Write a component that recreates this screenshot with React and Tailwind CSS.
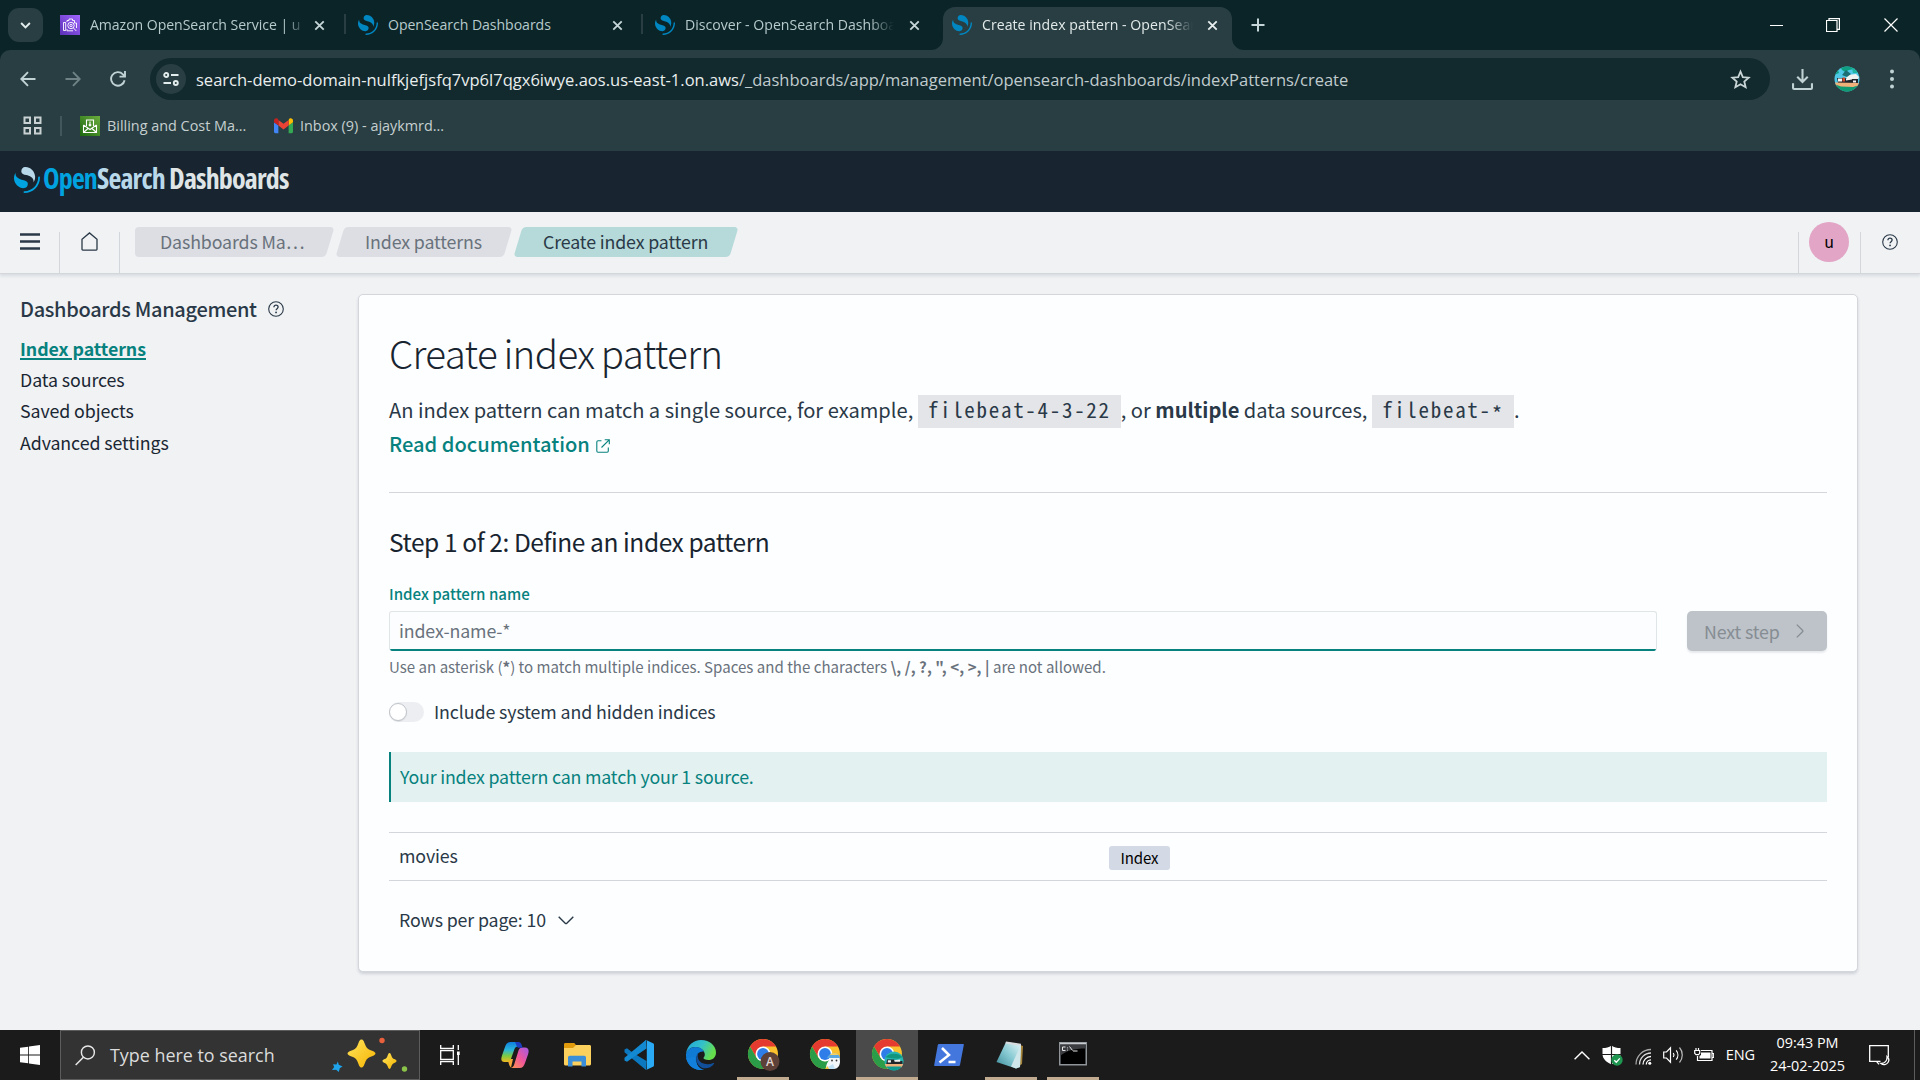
import React from "react";

const arc =
  "M61.7374 23.5C60.4878 23.5 59.4748 24.513 59.4748 25.7626C59.4748 44.3813 44.3813 59.4748 25.7626 59.4748C24.513 59.4748 23.5 60.4878 23.5 61.7374C23.5 62.987 24.513 64 25.7626 64C46.8805 64 64 46.8805 64 25.7626C64 24.513 62.987 23.5 61.7374 23.5Z";
const upper =
  "M48.0814 38C50.2572 34.4505 52.3615 29.7178 51.9475 23.0921C51.0899 9.36725 38.6589 -1.04463 26.9206 0.0837327C22.3253 0.525465 17.6068 4.2712 18.026 10.9805C18.2082 13.8961 19.6352 15.6169 21.9544 16.9399C24.1618 18.1992 26.9978 18.9969 30.2128 19.9011C34.0962 20.9934 38.6009 22.2203 42.063 24.7717C46.2125 27.8295 49.0491 31.3743 48.0814 38Z";
const lower =
  "M3.91861 14C1.74276 17.5495 -0.361506 22.2822 0.0524931 28.9079C0.910072 42.6327 13.3411 53.0446 25.0794 51.9163C29.6747 51.4745 34.3932 47.7288 33.974 41.0195C33.7918 38.1039 32.3647 36.3831 30.0456 35.0601C27.8382 33.8008 25.0022 33.0031 21.7872 32.0989C17.9038 31.0066 13.3991 29.7797 9.93694 27.2283C5.78746 24.1705 2.95092 20.6257 3.91861 14Z";

function Mark({ className, a, b }) {
  return (
    <svg viewBox="0 0 64 64" className={className}>
      <path d={arc} fill={a} />
      <path d={upper} fill={b} />
      <path d={lower} fill={a} />
    </svg>
  );
}

function Close({ className }) {
  return (
    <svg viewBox="0 0 12 12" className={className} stroke="currentColor" strokeWidth="2" fill="none">
      <path d="M1.4 1.4l9.2 9.2M10.6 1.4l-9.2 9.2" />
    </svg>
  );
}

function AwsIcon() {
  return (
    <svg viewBox="0 0 20 20" className="size-5 shrink-0">
      <defs>
        <linearGradient id="aws" x1="0" y1="1" x2="1" y2="0">
          <stop offset="0" stopColor="#5a30b5" />
          <stop offset="1" stopColor="#a166ff" />
        </linearGradient>
      </defs>
      <rect width="20" height="20" fill="url(#aws)" />
      <g fill="none" stroke="#fff" strokeWidth="0.9">
        <circle cx="11" cy="10.5" r="3.2" />
        <circle cx="11" cy="10.5" r="1.2" />
        <path d="M13.3 12.8l3 3.2M3.5 7.5h2.2v8H3.500zM7 7V5.500h2V4h3.500v1.500h2V8h2v5M7 14v1.800h6" />
      </g>
    </svg>
  );
}

function BillingIcon() {
  return (
    <svg viewBox="0 0 20 20" className="size-5 shrink-0">
      <defs>
        <linearGradient id="bill" x1="0" y1="1" x2="1" y2="0">
          <stop offset="0" stopColor="#1b660f" />
          <stop offset="1" stopColor="#6cae3e" />
        </linearGradient>
      </defs>
      <rect width="20" height="20" fill="url(#bill)" />
      <g fill="none" stroke="#fff" strokeWidth="1.1">
        <path d="M6.500 10V4h7v6M3.500 9v7.500h13V9M3.500 9l6.500 4.500L16.500 9M3.500 16.500l4.500-4M16.500 16.500l-4.500-4" />
        <path d="M10 5.500v4.500M8.700 8.700L10 10l1.300-1.300" />
      </g>
    </svg>
  );
}

function Gmail() {
  return (
    <svg viewBox="0 0 20 16" className="h-4 w-[19px] shrink-0">
      <path d="M1.400 15.500H4.600V7.500L0 4v10c0 .8.600 1.500 1.400 1.500z" fill="#4285f4" />
      <path d="M15.400 15.500h3.200c.8 0 1.400-.7 1.400-1.500V4l-4.600 3.500z" fill="#34a853" />
      <path d="M15.400 1.600v5.900L20 4V2.300c0-2-2.300-3.100-3.900-1.900z" fill="#fbbc04" />
      <path d="M4.600 7.500V1.600L10 5.700l5.400-4.100v5.900L10 11.600z" fill="#ea4335" />
      <path d="M0 2.300V4l4.600 3.500V1.600L3.900.4C2.300-.8 0 .3 0 2.300z" fill="#c5221f" />
    </svg>
  );
}

function PalmAvatar({ className }) {
  return (
    <svg viewBox="0 0 26 26" className={className}>
      <clipPath id="av">
        <circle cx="13" cy="13" r="12.500" />
      </clipPath>
      <g clipPath="url(#av)">
        <rect width="26" height="26" fill="#4fc8e8" />
        <path d="M6 0h14v3l-5 1-4 2-3-2zM0 3l4 1 1 3-5 2z" fill="#0fa083" />
        <path d="M18 2h8v5h-7z" fill="#1eb5a0" />
        <path d="M13 9l9-1 3 3-1 2H12z" fill="#eef3f2" />
        <path d="M8 9l4-5 5 4-4 3z" fill="#1c6f74" />
        <path d="M3 12h8l2 1h11v4H4z" fill="#20252c" />
        <path d="M4 12.500h4v3H4zM12 13l6-1.500v2l-6 1zM19 14.500h3v2h-3z" fill="#f5f5f3" />
        <path d="M8.500 11.500h2.500v4H8.500z" fill="#d34a2c" />
        <path d="M0 16.500l26 .5v4H0z" fill="#f0b07a" />
        <path d="M0 18l7 2.500 12 .5 7-2v7H0z" fill="#0f9a72" />
      </g>
    </svg>
  );
}

function Question({ className }) {
  return (
    <svg viewBox="0 0 16 16" className={className} fill="none" stroke="currentColor">
      <circle cx="8" cy="8" r="7.300" strokeWidth="1.100" />
      <path d="M5.900 6.300c0-1.200.9-2.100 2.100-2.100s2.100.8 2.100 1.900c0 1.500-2 1.700-2 3.200" strokeWidth="1.300" />
      <circle cx="8.050" cy="11.400" r="0.900" fill="currentColor" stroke="none" />
    </svg>
  );
}

function Tab({ title, icon, active, className, textClass }) {
  return (
    <div className={"flex items-center " + className}>
      {icon}
      <div className={"ml-[10px] flex-1 overflow-hidden text-[14.100px] leading-6 whitespace-nowrap " + textClass}>{title}</div>
      <Close className={active ? "size-[11px] text-[#e8eeee]" : "size-[11px] text-[#c6d6d8]"} />
    </div>
  );
}

function Browser() {
  const fav = <Mark className="size-5 shrink-0" a="#0086c0" b="#0086c0" />;
  return (
    <div className="h-[151px] bg-[#0b2427] font-['Open_Sans','Noto_Sans',sans-serif]">
      <div className="flex h-[50px] items-start">
        <div className="mt-2 ml-2 flex h-[34px] w-[35px] items-center justify-center rounded-[11px] bg-[#283e42]">
          <svg viewBox="0 0 12 8" className="h-[7px] w-[11px]" fill="none" stroke="#e3ecec" strokeWidth="2.200">
            <path d="M1 1.200l5 5 5-5" />
          </svg>
        </div>
        <Tab
          className="ml-[17px] h-[50px] w-[265px]"
          icon={<AwsIcon />}
          title="Amazon OpenSearch Service | u"
          textClass="mr-[13px] tracking-[-0.060px] text-[#b7cacc] [mask-image:linear-gradient(to_right,black_93%,transparent_102%)]"
        />
        <div className="mt-[14px] ml-[19px] h-5 w-[2px] bg-[#283e42]" />
        <Tab
          className="ml-[12px] h-[50px] w-[265px]"
          icon={fav}
          title="OpenSearch Dashboards"
          textClass="mr-[15px] tracking-[-0.050px] text-[#b7cacc]"
        />
        <div className="mt-[14px] ml-[18px] h-5 w-[2px] bg-[#283e42]" />
        <Tab
          className="ml-[12px] h-[50px] w-[265px]"
          icon={fav}
          title="Discover - OpenSearch Dashboards"
          textClass="mr-[15px] text-[#b7cacc] [mask-image:linear-gradient(to_right,black_88%,transparent)]"
        />
        <div className="relative ml-[23px] flex h-[50px] w-[289px] pt-[7px]">
          <svg viewBox="0 0 12 12" className="absolute bottom-0 -left-3 size-3 fill-[#283e42]">
            <path d="M12 0v12H0A12 12 0 0012 0z" />
          </svg>
          <svg viewBox="0 0 12 12" className="absolute -right-3 bottom-0 size-3 fill-[#283e42]">
            <path d="M0 0v12h12A12 12 0 010 0z" />
          </svg>
          <Tab
            active
            className="h-[43px] w-[289px] rounded-t-[12px] bg-[#283e42] pr-[14px] pb-[7px] pl-[9px]"
            icon={fav}
            title="Create index pattern - OpenSearch Dashboards"
            textClass="mr-[14px] tracking-[0.040px] text-[#e3eaea] [mask-image:linear-gradient(to_right,black_88%,transparent)]"
          />
        </div>
        <svg viewBox="0 0 14 14" className="mt-[18px] ml-[19px] size-[14px]" stroke="#c6d6d8" strokeWidth="2">
          <path d="M7 .5v13M.5 7h13" />
        </svg>
        <div className="mt-[17px] mr-[22px] ml-auto flex h-4 items-center text-white">
          <svg viewBox="0 0 13 1" className="h-px w-[13px]">
            <path d="M0 .5h13" stroke="currentColor" />
          </svg>
          <svg viewBox="0 0 14 14" className="ml-[43px] size-[14px]" fill="none" stroke="currentColor" strokeWidth="1.200">
            <path d="M.5 2.500h10.500v11H.5zM3 2.500V.6h10.400v10.800h-2.300" />
          </svg>
          <svg viewBox="0 0 14 14" className="ml-[44px] size-[14px]" stroke="currentColor" strokeWidth="1.200">
            <path d="M.5.5l13 13M13.500.5l-13 13" />
          </svg>
        </div>
      </div>
      <div className="h-[101px] rounded-t-[10px] bg-[#283e42] pt-2">
        <div className="flex h-[42px] items-center">
          <svg viewBox="0 0 16 16" className="ml-5 size-4" fill="none" stroke="#c0d2d4" strokeWidth="1.900">
            <path d="M15.500 8H1.500M8 1.200L1.300 8 8 14.800" />
          </svg>
          <svg viewBox="0 0 16 16" className="ml-[29px] size-4" fill="none" stroke="#6f8386" strokeWidth="1.900">
            <path d="M.5 8h14M8 1.200L14.700 8 8 14.800" />
          </svg>
          <svg viewBox="0 0 16 16" className="ml-[29px] size-4" fill="none" stroke="#c0d2d4" strokeWidth="1.900">
            <path d="M14.600 9.200A6.800 6.800 0 1112.900 3.300L15 5.500M15 0v5.600H9.500" />
          </svg>
          <div className="ml-6 flex h-[42px] w-[1620px] items-center rounded-full bg-[#12292d]">
            <div className="ml-[6px] flex size-[30px] items-center justify-center rounded-full bg-[#283e42]">
              <svg viewBox="0 0 16 14" className="h-[14px] w-4" fill="none" stroke="#e3ecec" strokeWidth="1.900">
                <circle cx="3.200" cy="3" r="2" />
                <path d="M8 3h7.500M.5 11H8" />
                <circle cx="12.800" cy="11" r="2" />
              </svg>
            </div>
            <div className="mt-px ml-[10px] text-[16.520px] leading-6 whitespace-nowrap text-[#e9eeee]">
              search-demo-domain-nulfkjefjsfq7vp6l7qgx6iwye.aos.us-east-1.on.aws
              <span className="text-[#c0cccd]">/_dashboards/app/management/opensearch-dashboards/indexPatterns/create</span>
            </div>
            <svg viewBox="0 0 20 20" className="mr-[19px] ml-auto size-[21px]" fill="none" stroke="#c9d5d6" strokeWidth="1.700">
              <path d="M10 2.500l2.200 5.200 5.600.5-4.200 3.700 1.300 5.500L10 14.500l-4.900 2.900 1.300-5.500-4.200-3.700 5.600-.5z" />
            </svg>
          </div>
          <svg viewBox="0 0 20 20" className="ml-[22px] size-[21px]" fill="none" stroke="#c0d2d4" strokeWidth="2">
            <path d="M10 0v12M5 7.300l5 5 5-5M1 13.500v4.500c0 .6.400 1 1 1h16c.6 0 1-.4 1-1v-4.500" />
          </svg>
          <PalmAvatar className="ml-[21px] size-[26px]" />
          <svg viewBox="0 0 4 22" className="ml-[30px] h-[22px] w-1 fill-[#c0d2d4]">
            <circle cx="2" cy="3.500" r="2" />
            <circle cx="2" cy="11" r="2" />
            <circle cx="2" cy="18.500" r="2" />
          </svg>
        </div>
        <div className="flex h-[51px] items-center text-[14.400px] whitespace-nowrap text-[#c6cfd0]">
          <svg viewBox="0 0 19 19" className="ml-[23px] size-[19px]" fill="none" stroke="#c9d1d2" strokeWidth="2">
            <path d="M1.500 1.500h5.500v5.500H1.500zM12 1.500h5.500v5.500H12zM1.500 12h5.500v5.500H1.500zM12 12h5.500v5.500H12z" />
          </svg>
          <div className="mr-[18px] ml-[18px] h-5 w-[2px] bg-[#41575b]" />
          <BillingIcon />
          <span className="ml-[7px] w-[167px]">Billing and Cost Ma...</span>
          <Gmail />
          <span className="ml-[7px]">Inbox (9) - ajaykmrd...</span>
        </div>
      </div>
    </div>
  );
}

function Crumb({ children, className, shape }) {
  return (
    <div className={"relative h-[30px] leading-[28px] " + className}>
      <div className={"absolute inset-y-0 -skew-x-[16.700deg] rounded-[4px] " + shape} />
      <span className="relative">{children}</span>
    </div>
  );
}

function SubHeader() {
  return (
    <div className="relative flex h-[62px] items-start border-b border-[#d3d6db] bg-[#f0f2f4] text-[17.800px] tracking-[-0.130px] shadow-[0_2px_3px_rgba(80,90,110,0.140)]">
      <div className="flex h-[61px] w-[59px] shrink-0 items-start">
        <svg viewBox="0 0 20 17" className="mt-[21px] ml-5 h-[17px] w-5" stroke="#2a3947" strokeWidth="2.300">
          <path d="M0 1.500h20M0 8.500h20M0 15.500h20" />
        </svg>
      </div>
      <div className="mt-5 h-[41px] w-px bg-[#d3d6db]" />
      <svg viewBox="0 0 17 19" className="mt-[20px] ml-[21px] h-[19px] w-[17px]" fill="none" stroke="#2a3947" strokeWidth="1.300">
        <path d="M1 17.300V7.200L8.500.9 16 7.200v10.100c0 .5-.3.800-.8.800H1.800c-.5 0-.8-.3-.8-.8z" />
      </svg>
      <div className="mt-5 ml-[21px] h-[41px] w-px bg-[#d3d6db]" />
      <div className="mt-[15px] ml-[15px] flex text-[#69727c]">
        <div className="relative w-[201px]">
          <div className="absolute top-0 left-0 h-[30px] w-[170px] rounded-[4px] bg-[#dcdee3]" />
          <Crumb className="pl-[25px]" shape="left-[8px] w-[187px] bg-[#dcdee3]">
            Dashboards Ma…
          </Crumb>
        </div>
        <Crumb className="w-[178px] pl-[29px]" shape="left-[4px] w-[168px] bg-[#dcdee3]">
          Index patterns
        </Crumb>
        <Crumb className="w-[224px] pl-[29px] text-[#2a3947]" shape="left-[4px] w-[216px] bg-[#b5dad9]">
          Create index pattern
        </Crumb>
      </div>
      <div className="mt-5 ml-auto h-[41px] w-px bg-[#d3d6db]" />
      <div className="mt-[10px] ml-[10px] size-10 rounded-full bg-[#e2a5c6] text-center text-[16px] leading-[38px] text-black">u</div>
      <div className="mt-5 ml-[11px] h-[41px] w-px bg-[#d3d6db]" />
      <Question className="mt-[22px] mr-[22px] ml-[21px] size-[16px] text-[#2a3947]" />
    </div>
  );
}

function Sidebar() {
  return (
    <div className="flex w-[358px] shrink-0 flex-col items-start pl-5 text-[17.800px] tracking-[-0.090px] text-[#1a2733]">
      <div className="mt-5 flex h-[29px] items-center text-[20px] font-medium tracking-[-0.320px] text-[#2a3947]">
        <span className="leading-[29px]">Dashboards Management</span>
        <Question className="ml-[11px] size-4" />
      </div>
      <div className="mt-[10px] leading-[31.200px]">
        <div className="font-bold tracking-[-0.050px] text-[#07827e] underline decoration-2 underline-offset-2">Index patterns</div>
        <div>Data sources</div>
        <div>Saved objects</div>
        <div>Advanced settings</div>
      </div>
    </div>
  );
}

function Code({ children }) {
  return (
    <code className="-mb-[5px] inline-block bg-[#e3e5e9] px-[10px] pb-[5px] font-['Noto_Sans_Mono_CJK_SC','DejaVu_Sans_Mono',monospace] text-[21px] leading-[28px] tracking-[1.700px]">
      {children}
    </code>
  );
}

function Panel() {
  return (
    <div className="mt-5 flex h-[678px] w-[1500px] flex-col rounded-[5px] border border-[#d3d6db] bg-[#fdfeff] px-[30px] text-[17.800px] tracking-[-0.130px] text-[#2a3947] shadow-[0_2px_3px_rgba(80,90,110,0.200)]">
      <h1 className="mt-8 h-[50px] text-[38.500px] leading-[50px] font-extralight tracking-[-0.650px] text-[#18242f] [word-spacing:-1.500px]">
        Create index pattern
      </h1>
      <div className="mt-4 h-[68px] text-[20.100px] leading-[34px] tracking-normal">
        <div className="h-[34px] whitespace-nowrap">
          An index pattern can match a single source, for example, <Code>filebeat-4-3-22</Code>, or{" "}
          <strong className="font-bold">multiple</strong> data sources,{" "}
          <Code>
            filebeat-<span className="relative top-1">*</span>
          </Code>
          .
        </div>
        <div className="flex h-[34px] items-center font-medium text-[#07827e]">
          Read documentation
          <svg viewBox="0 0 14 14" className="mt-[3px] ml-[6px] size-[14px]" fill="none" stroke="currentColor" strokeWidth="1.100">
            <path d="M5.500 1.700H2C1.300 1.700.8 2.200.8 2.900v9.100c0 .7.500 1.200 1.200 1.200h9.100c.7 0 1.200-.5 1.200-1.200V8.500M5.500 8.500l7.700-7.700M8.700.7h4.600v4.600" />
          </svg>
        </div>
      </div>
      <div className="mt-[31px] h-px shrink-0 bg-[#d3d6db]" />
      <h2 className="mt-[31px] h-9 text-[24.500px] leading-9 tracking-[-0.420px] text-[#18242f]">
        Step 1 of 2: Define an index pattern
      </h2>
      <div className="mt-[24px] h-[18px] text-[15.100px] leading-[18px] font-medium tracking-normal text-[#07827e]">Index pattern name</div>
      <div className="mt-[9px] flex justify-between">
        <div className="h-10 w-[1268px] overflow-hidden rounded-[3px] border border-b-0 border-[#e0e5e7] bg-[#fcfdfe]">
          <div className="h-[37px] pl-[9px] leading-[37px] text-[#69727c]">index-name-*</div>
          <div className="-mx-px h-[2px] bg-[#07827e]" />
        </div>
        <div className="flex h-10 w-[140px] items-center rounded-[5px] bg-[#bdc3c9] pl-[17px] text-[#868d93] shadow-[0_2px_2px_rgba(80,90,110,0.130)]">
          <span className="leading-[38px]">Next step</span>
          <svg viewBox="0 0 8 14" className="ml-[16px] h-[14px] w-2" fill="none" stroke="currentColor" strokeWidth="1.300">
            <path d="M.8.6l5.700 5.600c.5.500.5 1.100 0 1.600L.8 13.400" />
          </svg>
        </div>
      </div>
      <div className="mt-[5px] h-[21px] text-[15.050px] leading-[21px] tracking-[0.010px] whitespace-nowrap text-[#69727c]">
        Use an asterisk (<b>*</b>) to match multiple indices. Spaces and the characters{" "}
        <b className="tracking-[0.060px]">{"\\, /, ?, \", <, >, |"}</b> are not allowed.
      </div>
      <div className="mt-[25px] flex h-5 items-center">
        <div className="h-5 w-[35px] rounded-full bg-[#edeef1] pt-px">
          <div className="size-[18px] rounded-full border border-[#bfc4ca] bg-white shadow-[0_1px_1px_rgba(0,0,0,0.080)]" />
        </div>
        <span className="-mt-[2px] ml-[10px] leading-5 tracking-[-0.100px]">Include system and hidden indices</span>
      </div>
      <div className="mt-[30px] h-[50px] shrink-0 border-l-2 border-[#07827e] bg-[#e4f1f1] pl-[9px] leading-[49px] tracking-[-0.170px] text-[#07827e]">
        Your index pattern can match your 1 source.
      </div>
      <div className="mt-[30px] grid h-[49px] shrink-0 grid-cols-2 items-start border-y border-[#d3d6db]">
        <div className="pl-[10px] leading-[45px]">movies</div>
        <div className="mt-[13px] ml-px h-6 w-[61px] rounded-[3px] bg-[#d3d9e5] text-center text-[15px] leading-6 text-black">Index</div>
      </div>
      <div className="mt-7 flex h-[21px] items-center pl-[10px] leading-[21px]">
        Rows per page: 10
        <svg viewBox="0 0 16 9" className="mt-[2px] ml-3 h-[9px] w-4" fill="none" stroke="currentColor" strokeWidth="1.400">
          <path d="M.7.7l6.500 6.500c.5.500 1.100.5 1.600 0L15.300.7" />
        </svg>
      </div>
    </div>
  );
}

function Chrome({ children }) {
  return (
    <svg viewBox="0 0 34 34" className="ml-[2px] size-[34px]">
      <circle cx="16" cy="16" r="15" fill="#fbc02d" />
      <path d="M3 8.500A15 15 0 0129 8.500H16L9.500 19.800z" fill="#e53a30" />
      <path d="M3 8.500L9.500 19.750 16 23.500l6.500-3.750L16 31A15 15 0 013 8.500z" fill="#2b9c48" />
      <circle cx="16" cy="16" r="7.500" fill="#fff" />
      <circle cx="16" cy="16" r="5.900" fill="#2f7de9" />
      {children}
    </svg>
  );
}

function Slot({ children, open, active }) {
  return (
    <div className={"relative flex h-[50px] w-[62px] items-center justify-center " + (active ? "bg-[#4a4a4a]" : "")}>
      {children}
      {(open || active) && <div className={"absolute bottom-0 h-[3px] bg-[#c0aa90] " + (active ? "inset-x-0" : "inset-x-[5px]")} />}
    </div>
  );
}

function Taskbar() {
  return (
    <div className="flex h-[50px] items-center bg-[#1b1b1b] font-['Open_Sans','Noto_Sans',sans-serif] text-white">
      <svg viewBox="0 0 20 20" className="mr-5 ml-5 size-5 fill-white">
        <path d="M0 2.800L8.200 1.700v7.800H0zM9 1.600L20 0v9.500H9zM0 10.400h8.200v7.900L0 17.200zM9 10.400h11V20L9 18.400z" />
      </svg>
      <div className="flex h-[50px] w-[360px] items-center border border-[#5c5c5c] bg-[#333]">
        <svg viewBox="0 0 22 22" className="ml-[14px] size-[21px]" fill="none" stroke="#e8e8e8" strokeWidth="1.500">
          <circle cx="13.500" cy="7.800" r="6.800" />
          <path d="M8.800 12.800L.7 21" />
        </svg>
        <span className="ml-[14px] text-[17.900px] text-[#dcdcdc]">Type here to search</span>
        <svg viewBox="0 0 78 36" className="mr-[10px] ml-auto h-[36px] w-[78px]">
          <defs>
            <linearGradient id="star" x1="0" y1="0" x2="1" y2="1">
              <stop offset="0" stopColor="#ffe45c" />
              <stop offset="1" stopColor="#f5b301" />
            </linearGradient>
          </defs>
          <path
            d="M30.500 2.500c2 0 2.600 2.500 3.600 5s2 4.200 4.900 5.400 5.500 1.900 5.500 3.600-2.600 2.400-5.500 3.600-3.900 2.900-4.900 5.400-1.600 5-3.600 5-2.600-2.500-3.600-5-2-4.200-4.900-5.400-5.500-1.900-5.500-3.600 2.600-2.400 5.500-3.600 3.900-2.900 4.900-5.400 1.600-5 3.600-5z"
            fill="url(#star)"
          />
          <path d="M58.500 16c1.200 0 1.500 2 2.200 3.400s1 2 2.600 2.700 2.200 1 2.200 1.900-.6 1.200-2.200 1.900-1.900 1.300-2.600 2.700-1 3.400-2.200 3.400-1.500-2-2.200-3.400-1-2-2.600-2.700-2.200-1-2.200-1.900.6-1.200 2.200-1.900 1.900-1.300 2.600-2.700 1-3.400 2.200-3.400z" fill="url(#star)" />
          <path d="M6.800 24.500l1 3.300 3.700 1.700-2.700 1.700-1 3.800-2.700-2.300-4.100.3 2.200-3-1.200-2.700 3.400.3z" fill="#1fa3ea" />
          <circle cx="51" cy="3.500" r="2.700" fill="#e8603c" />
          <circle cx="73.500" cy="32" r="2.700" fill="#8bc34a" />
        </svg>
      </div>
      <svg viewBox="0 0 20 20" className="mr-[24px] ml-5 size-5" fill="none" stroke="#fff" strokeWidth="1.300">
        <path d="M.7 0v3.300h12.600V0M.7 20v-3.300h12.600V20M.7 5.500h12.600v9H.7zM18.300 0v5M18.300 10v10" />
        <path d="M17 6.500h2.700V10H17z" fill="#fff" stroke="none" />
      </svg>
      <Slot>
        <svg viewBox="0 0 28 26" className="mb-px h-[26px] w-7">
          <defs>
            <linearGradient id="c1" x1="0" y1="0" x2="0" y2="1">
              <stop offset="0" stopColor="#0f7fe0" />
              <stop offset="0.400" stopColor="#2bb6d8" />
              <stop offset="0.700" stopColor="#7ccb3f" />
              <stop offset="1" stopColor="#f2b81f" />
            </linearGradient>
            <linearGradient id="c2" x1="1" y1="0" x2="0" y2="1">
              <stop offset="0" stopColor="#a25be8" />
              <stop offset="0.500" stopColor="#f0569a" />
              <stop offset="1" stopColor="#ff9a4a" />
            </linearGradient>
          </defs>
          <path d="M10 25.500c-1.500-1-2-3-2.600-5.500L6 17h6z" fill="#f4a63a" />
          <path d="M12 26h6.500c3 0 4.500-2 5.500-5l3-8.500c1.500-4.500.3-7-3-7h-2.500c-2.500 0-3.500 1.500-4.300 4l-3.700 12c-.7 2.300-1.500 4.500-4 4.500z" fill="url(#c2)" />
          <path d="M20 4.500C19.200 1.500 18.500 0 16 0H9.500C6.500 0 5 2 4 5L1 13.500C-.5 18 .5 20 3.500 20H6c2.700 0 3.500-1.500 4.300-4l3-8.500c.7-2 1.700-3 3.700-3z" fill="url(#c1)" />
          <path d="M14 0h3c2.500 0 3.300 1.500 4 4l.6 1.800h-4C16 5.800 15.600 3 14 0z" fill="#1b3fc0" />
        </svg>
      </Slot>
      <Slot>
        <svg viewBox="0 0 28 24" className="h-6 w-7">
          <path d="M1 1.500C1 .7 1.500 0 2.300 0h9l2 2.500-3 3.500H1z" fill="#e09a0c" />
          <path d="M1 5h9l3-3h13.500c.8 0 1.500.6 1.500 1.400V21c0 .8-.7 1.500-1.500 1.500h-24C1.600 22.500 1 21.800 1 21z" fill="#fbd05c" />
          <path d="M5 23.500v-9c0-1 .8-1.800 1.800-1.800h14.400c1 0 1.800.8 1.800 1.800v9h-4.500v-5h-9v5z" fill="#3a8fd8" />
        </svg>
      </Slot>
      <Slot>
        <svg viewBox="0 0 30 30" className="size-[30px]">
          <path d="M22 0L8.500 12.500 3 8.200.5 9.500v2.700L22 30l.5-9-10-6 10-6.500z" fill="#0b78bf" />
          <path d="M.5 20.500L3 21.800 22 8.500V0L.5 17.800z" fill="#1389d2" />
          <path d="M22 0l7 3.200c.6.300 1 .8 1 1.500v20.600c0 .7-.4 1.200-1 1.500L22 30c1-.5.800-1.500.8-2V2c0-.6.200-1.500-.8-2z" fill="#2aa9f4" />
        </svg>
      </Slot>
      <Slot>
        <svg viewBox="0 0 30 30" className="size-[30px]">
          <defs>
            <linearGradient id="e1" x1="0" y1="0" x2="1" y2="0.400">
              <stop offset="0" stopColor="#1fa4dc" />
              <stop offset="0.550" stopColor="#35c1c8" />
              <stop offset="1" stopColor="#66de4c" />
            </linearGradient>
          </defs>
          <path d="M0 14C1 5.500 7.500 0 15 0c9 0 15 6 15 12.500 0 5-3.500 7.500-7.500 7.500-3.500 0-5-1.200-5-2 0-.6 1.300-1.300 1.300-3.500C18.800 11 15 7 9.500 7 4.500 7 1 10.500 0 14z" fill="url(#e1)" />
          <path d="M0 14c1-3.800 4.500-7 9.500-7 4 0 7 2 8.500 4.600-7.500-1.600-10.500 8-4.500 18.300C6 29.500 0 23 0 16z" fill="#0f7bd4" />
          <path d="M12.300 12.500C8.500 16.500 10 25.500 16.500 28c4.500 1.200 9-.8 11.500-4.300.4-.6-.2-1-.8-.7-5.500 2.600-13.700 1-15.200-5-.5-2 0-4 .3-5.500z" fill="#124f9a" />
          <path d="M9 17c0 6 4 12 9 12.700C11 31.500 2 27 .2 18z" fill="#1280da" />
        </svg>
      </Slot>
      <Slot open>
        <Chrome>
          <circle cx="23" cy="23.500" r="9.500" fill="#5d4037" />
          <text x="23" y="28" textAnchor="middle" fontSize="12" fontWeight="600" fill="#e0d6d2">
            A
          </text>
        </Chrome>
      </Slot>
      <Slot>
        <Chrome>
          <path d="M17 30c0-4 2-6 3-8 0-4 3-6.500 6-6.500 4 0 5 4 5 8s-2 7.500-7 7.500z" fill="#f3f7fa" />
          <path d="M18 20c1-3.500 5-5 8-4.500 3.500.5 4.500 2 5 4.500z" fill="#5aa7e0" />
          <path d="M20.500 17c2-2.500 7-2.500 9 0z" fill="#f4d060" />
          <path d="M17 31l1-3 3 3z" fill="#f4c430" />
          <path d="M19 29l5-3 2 5h-6z" fill="#bfe0f5" />
          <circle cx="23" cy="22.500" r="0.900" fill="#333" />
          <circle cx="27.500" cy="22.500" r="0.900" fill="#333" />
        </Chrome>
      </Slot>
      <Slot active>
        <Chrome>
          <svg x="13" y="13" width="20" height="20" viewBox="0 0 26 26">
            <circle cx="13" cy="13" r="12.500" fill="#27b5b0" />
            <path d="M2 8c5-6 17-6 22 0l-6 2-10-1z" fill="#10967f" />
            <path d="M4 11h9l2 2h9v4H3z" fill="#22262b" />
            <path d="M5 12h4v3H5zM13 12l8-1v3l-7 0z" fill="#f5f5f3" />
            <path d="M1 17h24l-2 4H3z" fill="#f0b07a" />
            <path d="M3 20h20c-3 6-16 7-20 0z" fill="#0f9a92" />
          </svg>
        </Chrome>
      </Slot>
      <Slot>
        <svg viewBox="0 0 30 22" className="h-[22px] w-[30px]">
          <path d="M5 0h24c.6 0 1 .4.800 1L26 21c-.2.600-.6 1-1.200 1H1c-.6 0-1-.4-.8-1L3.800 1C4 .4 4.400 0 5 0z" fill="#4377dd" />
          <path d="M8 4l7 7-9.500 7.500M14.500 18h7" fill="none" stroke="#fff" strokeWidth="2.500" />
        </svg>
      </Slot>
      <Slot open>
        <svg viewBox="0 0 28 28" className="-ml-[3px] size-7">
          <defs>
            <linearGradient id="np" x1="1" y1="0" x2="0" y2="1">
              <stop offset="0" stopColor="#e6f6f7" />
              <stop offset="0.500" stopColor="#86c9d2" />
              <stop offset="1" stopColor="#3a8a98" />
            </linearGradient>
          </defs>
          <path d="M24 4l3 1-1 18-3 2z" fill="#a88438" />
          <path d="M10 1l15 2.500L24 26l-4 1.500L.5 21z" fill="url(#np)" />
          <path d="M25 3.500L24 26l-4 1.500-5-2z" fill="#cfe6ea" />
          <path d="M10 .5l15 2.300-.3 2L9.500 2.500z" fill="#d9dcde" />
        </svg>
      </Slot>
      <Slot open>
        <svg viewBox="0 0 28 24" className="-mt-[2px] -ml-px h-6 w-7">
          <rect x="0.750" y="0.750" width="26.500" height="22" fill="#000" stroke="#8f9499" strokeWidth="1.500" />
          <path d="M1.500 1.500h25v5c-12 0-18 2-25 7z" fill="#3b3d40" />
          <path d="M1 1.500h26" stroke="#c8ccd0" strokeWidth="1.500" />
          <path d="M6.500 5h-3v3.500h3M8.500 5.500v.8M8.500 7.700v.8M10.500 4.500l3 4M14 9h4.500" stroke="#e6e6e6" strokeWidth="1" fill="none" />
        </svg>
      </Slot>
      <div className="flex-1" />
      <svg viewBox="0 0 16 9" className="h-[9px] w-4" fill="none" stroke="#fff" strokeWidth="1.400">
        <path d="M.6 8.300L8 1l7.400 7.300" />
      </svg>
      <svg viewBox="0 0 21 21" className="ml-3 size-[21px]">
        <path d="M9.500.5c2.500 2 5.500 2.500 9 2.500v6c0 5-4 8-9 10.500C4.500 17 .5 14 .5 9V3c3.500 0 6.500-.5 9-2.500z" fill="#fff" />
        <path d="M9.500 0v20M0 9.500h19" stroke="#1b1b1b" strokeWidth="1.200" />
        <circle cx="15" cy="15" r="5.700" fill="#1f9650" />
        <path d="M12.300 15.200l2 2 3.500-3.800" fill="none" stroke="#fff" strokeWidth="1.300" />
      </svg>
      <svg viewBox="0 0 17 17" className="mt-[2px] ml-[12px] size-[17px]" fill="none" strokeWidth="1.300">
        <path d="M1 16.500A15 15 0 0116 1.500" stroke="#aaa" />
        <path d="M4.500 16.500A11.500 11.500 0 0116 5" stroke="#ddd" />
        <path d="M8 16.500A8 8 0 0116 8.500" stroke="#fff" />
        <path d="M11.300 16.500a4.700 4.700 0 014.700-4.700" stroke="#fff" />
        <circle cx="14.800" cy="15.300" r="1.500" fill="#fff" />
      </svg>
      <svg viewBox="0 0 22 18" className="ml-[11px] h-[18px] w-[22px]" fill="none" stroke="#fff" strokeWidth="1.200">
        <path d="M.7 6h2.800l4-4.200v14.400l-4-4.200H.7zM10.300 7c.9 1.200.9 2.800 0 4" />
        <path d="M13.200 4.300c2.200 2.700 2.200 6.700 0 9.400" />
        <path d="M16.500 1.500c3.700 4.300 3.700 10.700 0 15" stroke="#bbb" />
      </svg>
      <svg viewBox="0 0 20 14" className="ml-[9px] h-[14px] w-5" fill="none" stroke="#fff" strokeWidth="1.200">
        <path d="M7 2.500h11v10H3.500V8M18.500 5.500h1.200v4h-1.200" />
        <path d="M7 4.500h9.500v6h-11V8L7 7z" fill="#fff" stroke="none" />
        <path d="M.7 2.500h5v2.800L4.500 6.700H2L.7 5.300zM2 0v2.500M4.500 0v2.500" />
      </svg>
      <span className="ml-[12px] text-[14.500px] tracking-[-0.100px]">ENG</span>
      <div className="mt-[2px] ml-[14px] w-[77px] text-center text-[14.400px] leading-[22.700px] whitespace-nowrap">
        <div className="-mt-[2px]">09:43 PM</div>
        <div>24-02-2025</div>
      </div>
      <svg viewBox="0 0 21 21" className="ml-[23px] size-[21px]" fill="none" stroke="#fff" strokeWidth="1.300">
        <path d="M11.500 16.300H7.500H.7V.7h18.600V12" />
        <path d="M7.500 16.300l2.500 3" />
        <path d="M18 11.500c1.800 1.500 2.300 4 1 6-1.500 2.300-4.700 2.900-7 1 3.500.3 6.500-3 6-7z" />
      </svg>
      <div className="ml-[24px] h-[50px] w-px bg-[#5c5c5c]" />
      <div className="w-[5px]" />
    </div>
  );
}

export default function App() {
  return (
    <div className="flex h-[1080px] w-[1920px] flex-col overflow-hidden bg-[#f0f2f4] font-['Noto_Sans_CJK_SC','Noto_Sans',sans-serif]">
      <Browser />
      <div className="flex h-[61px] shrink-0 items-start bg-[#18242f]">
        <Mark className="mt-4 ml-[14px] size-[26px]" a="#00a3e0" b="#b9d9eb" />
        <div className="mt-2 ml-[3px] font-['Open_Sans',sans-serif] text-[28px] leading-[38px] font-bold tracking-[-0.850px] whitespace-nowrap text-[#dfe5e6] [font-stretch:75%]">
          <span className="text-[#00a3e0]">Open</span>
          <span className="text-[#b9d9eb]">Search</span> Dashboards
        </div>
      </div>
      <SubHeader />
      <div className="flex flex-1">
        <Sidebar />
        <Panel />
      </div>
      <Taskbar />
    </div>
  );
}
